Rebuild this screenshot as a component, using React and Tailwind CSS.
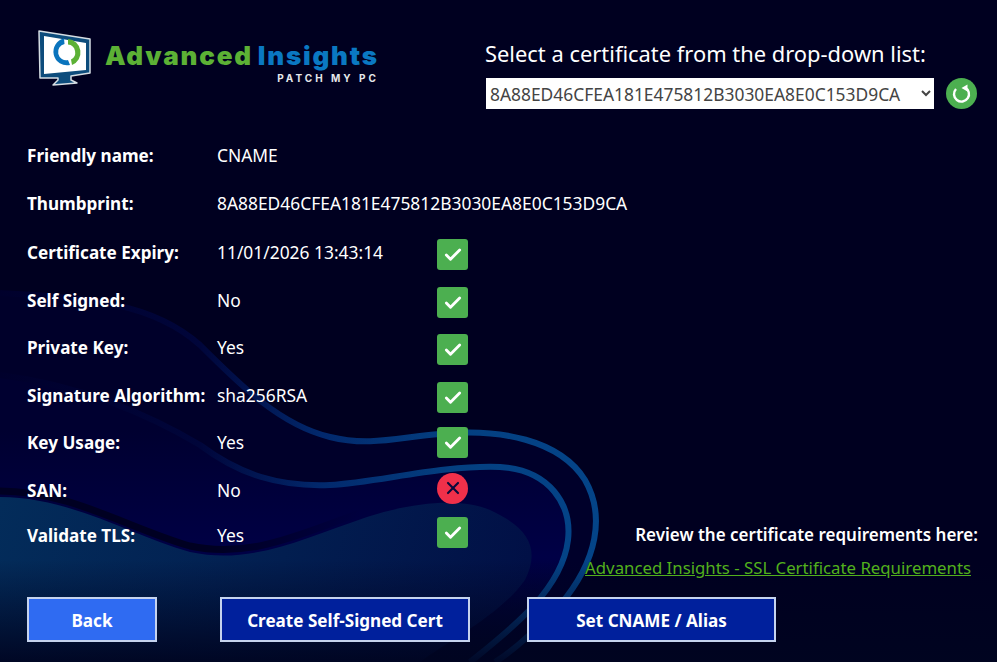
import { Check, X } from "lucide-react"

const rows = [
  { label: "Friendly name:", value: "CNAME", status: null, rowClass: "" },
  { label: "Thumbprint:", value: "8A88ED46CFEA181E475812B3030EA8E0C153D9CA", status: null, rowClass: "" },
  { label: "Certificate Expiry:", value: "11/01/2026 13:43:14", status: "ok", rowClass: "mt-px", iconClass: "mt-[5px]" },
  { label: "Self Signed:", value: "No", status: "ok", rowClass: "", iconClass: "mt-[5px]" },
  { label: "Private Key:", value: "Yes", status: "ok", rowClass: "-mt-px", iconClass: "mt-[5px]" },
  { label: "Signature Algorithm:", value: "sha256RSA", status: "ok", rowClass: "", iconClass: "mt-[5px]" },
  { label: "Key Usage:", value: "Yes", status: "ok", rowClass: "-mt-px", iconClass: "mt-px" },
  { label: "SAN:", value: "No", status: "bad", rowClass: "", iconClass: "mb-1" },
  { label: "Validate TLS:", value: "Yes", status: "ok", rowClass: "-mt-[3px]", iconClass: "mb-[5px]" },
]

const bandA = "M0 293 C80 298 150 300 200 345 C240 385 280 425 330 437 C370 447 400 437 440 434 C500 428 560 440 585 480 C605 515 598 560 560 605 C535 630 515 650 495 662"
const bandB = "M0 375 C80 385 150 415 200 445 C240 475 280 487 330 485 C380 482 440 465 500 467 C550 470 572 505 568 540 C562 590 510 630 470 662"

const Background = () => (
  <svg className="absolute inset-0" width="997" height="662" viewBox="0 0 997 662">
    <defs>
      <linearGradient id="lowerFill" x1="0" y1="500" x2="560" y2="640" gradientUnits="userSpaceOnUse">
        <stop offset="0" stopColor="#032c5a" />
        <stop offset="0.5" stopColor="#021e50" />
        <stop offset="1" stopColor="#010d44" />
      </linearGradient>
      <linearGradient id="bandFade" x1="0" y1="0" x2="997" y2="0" gradientUnits="userSpaceOnUse">
        <stop offset="0" stopColor="#00002c" />
        <stop offset="0.2" stopColor="#00053a" />
        <stop offset="0.32" stopColor="#02286c" />
        <stop offset="0.45" stopColor="#043f80" />
        <stop offset="0.6" stopColor="#044488" />
      </linearGradient>
      <linearGradient id="stripeFade" x1="0" y1="0" x2="360" y2="0" gradientUnits="userSpaceOnUse">
        <stop offset="0" stopColor="#000022" />
        <stop offset="0.6" stopColor="#000022" />
        <stop offset="1" stopColor="#000022" stopOpacity="0" />
      </linearGradient>
      <linearGradient id="bandDown" x1="0" y1="430" x2="0" y2="662" gradientUnits="userSpaceOnUse">
        <stop offset="0" stopColor="#000030" />
        <stop offset="0.55" stopColor="#000046" />
        <stop offset="1" stopColor="#000526" />
      </linearGradient>
      <linearGradient id="bottomFade" x1="0" y1="560" x2="0" y2="662" gradientUnits="userSpaceOnUse">
        <stop offset="0" stopColor="#000420" stopOpacity="0" />
        <stop offset="1" stopColor="#000420" stopOpacity="0.92" />
      </linearGradient>
    </defs>
    <rect width="997" height="662" fill="#000020" />
    <path d={`${bandA} L0 662 Z`} fill="#00002a" />
    <path d={`${bandB} L0 662 Z`} fill="url(#bandDown)" />
    <path d={bandA} fill="none" stroke="url(#bandFade)" strokeWidth="6" />
    <path d={bandB} fill="none" stroke="url(#bandFade)" strokeWidth="6" />
    <path d="M0 491 C70 491 130 529 190 546 C250 559 300 534 360 513" fill="none" stroke="url(#stripeFade)" strokeWidth="7" />
    <path
      d="M0 497 C70 497 130 535 190 552 C250 565 300 540 367 517 C410 503 460 497 490 510 C530 528 540 550 525 580 C500 615 450 640 420 662 L0 662 Z"
      fill="url(#lowerFill)"
    />
    <rect y="560" width="997" height="102" fill="url(#bottomFade)" />
  </svg>
)

const Logo = () => (
  <div className="flex">
    <svg width="56" height="58" viewBox="36 29 56 58" className="-mt-px">
      <path d="M38 31 L89 39 L89 73 L70 76 L70 80 L76 83 L52 85 L57 80 L57 78 L39 78 Z" fill="#0d4c7c" stroke="#d5dde3" strokeWidth="1.5" strokeLinejoin="round" />
      <path d="M43 36 L85 43 L85 70 L43 74 Z" fill="#ffffff" />
      <path d="M63 38.5 A13.5 13.5 0 1 0 69 65 L67 60 A8 8 0 1 1 63.500 44 Z" fill="#0a74bd" />
      <path d="M67 39 A13.5 13.5 0 0 1 71 65 L70 59.500 A8 8 0 0 0 67 44.500 Z" fill="#5cb135" />
    </svg>
    <div className="ml-[12px] mt-[8px] flex flex-col items-end font-['Inter',sans-serif]">
      <div className="text-[26px] leading-[36px] font-black tracking-[1.8px] whitespace-nowrap">
        <span className="text-[#5cb135]">Advanced</span>
        <span className="ml-[5px] text-[#0a78c2]">Insights</span>
      </div>
      <div className="-mt-[2px] text-[10px] leading-[12px] font-bold tracking-[3px] text-[#e4e7ea] whitespace-nowrap">PATCH MY PC</div>
    </div>
  </div>
)

const StatusIcon = ({ status, className }) => {
  if (status === "ok") {
    return (
      <div className={`flex h-[31px] w-[31px] items-center justify-center rounded-[3px] bg-[#4caf50] ${className}`}>
        <Check className="h-5 w-5 text-white" strokeWidth={3.4} />
      </div>
    )
  }
  return (
    <div className={`flex h-[31px] w-[31px] items-center justify-center rounded-full bg-[#f0304a] ${className}`}>
      <X className="h-5 w-5 text-[#0a0a3c]" strokeWidth={2.6} />
    </div>
  )
}

export default function App() {
  return (
    <div className="relative h-[662px] w-[997px] overflow-hidden bg-[#000020] font-['Noto_Sans',sans-serif] text-white">
      <Background />

      <div className="relative flex h-full flex-col">
        {/* Header */}
        <div className="flex h-[131px] shrink-0">
          <div className="w-[485px] pl-[37px] pt-[30px]">
            <Logo />
          </div>
          <div className="pt-[38px]">
            <div className="h-[32px] text-[21.9px] leading-[32px] whitespace-nowrap">Select a certificate from the drop-down list:</div>
            <div className="ml-px mt-[8px] flex items-center">
              <select className="h-[31px] w-[448px] bg-white text-[17.4px] text-[#444444]">
                <option>8A88ED46CFEA181E475812B3030EA8E0C153D9CA</option>
              </select>
              <button className="ml-[12px] flex h-[31px] w-[31px] items-center justify-center rounded-full bg-[#4caf50]">
                <svg width="21" height="21" viewBox="0 0 21 21" fill="none" stroke="white" strokeWidth="2.4">
                  <path d="M5 6 A7.500 7.500 0 1 0 14 4.500" />
                  <path d="M16.500 1.500 L16.500 8.500 L10.500 5 Z" fill="white" stroke="none" />
                </svg>
              </button>
            </div>
          </div>
        </div>

        {/* Details */}
        <div className="flex h-[466px] shrink-0 justify-between">
          <div className="pl-[27px]">
            {rows.map((row) => (
              <div key={row.label} className={`flex h-[48px] items-center ${row.rowClass}`}>
                <div className="w-[190px] pt-px text-[17.1px] font-bold whitespace-nowrap">{row.label}</div>
                <div className="w-[220px] text-[17.4px] whitespace-nowrap">{row.value}</div>
                {row.status && <StatusIcon status={row.status} className={row.iconClass} />}
              </div>
            ))}
          </div>
          <div className="flex flex-col items-end justify-end pb-[17px] pr-[19px]">
            <div className="h-[24px] text-[17px] leading-[24px] font-semibold whitespace-nowrap">Review the certificate requirements here:</div>
            <a href="#" className="mr-[7px] mt-[9px] h-[24px] text-[16.8px] leading-[24px] text-[#52b01c] underline whitespace-nowrap">
              Advanced Insights - SSL Certificate Requirements
            </a>
          </div>
        </div>

        {/* Actions */}
        <div className="flex pl-[27px]">
          <button className="h-[45px] w-[130px] border-2 border-[#c5d3ee] bg-[#2f6bf2] pt-[2px] text-[17.1px] font-bold">Back</button>
          <button className="ml-[63px] h-[45px] w-[250px] border-2 border-[#c5d3ee] bg-[#00209c] pt-[2px] text-[17.1px] font-bold">Create Self-Signed Cert</button>
          <button className="ml-[57px] h-[45px] w-[249px] border-2 border-[#c5d3ee] bg-[#00209c] pt-[2px] text-[17.1px] font-bold">Set CNAME / Alias</button>
        </div>
      </div>
    </div>
  )
}
